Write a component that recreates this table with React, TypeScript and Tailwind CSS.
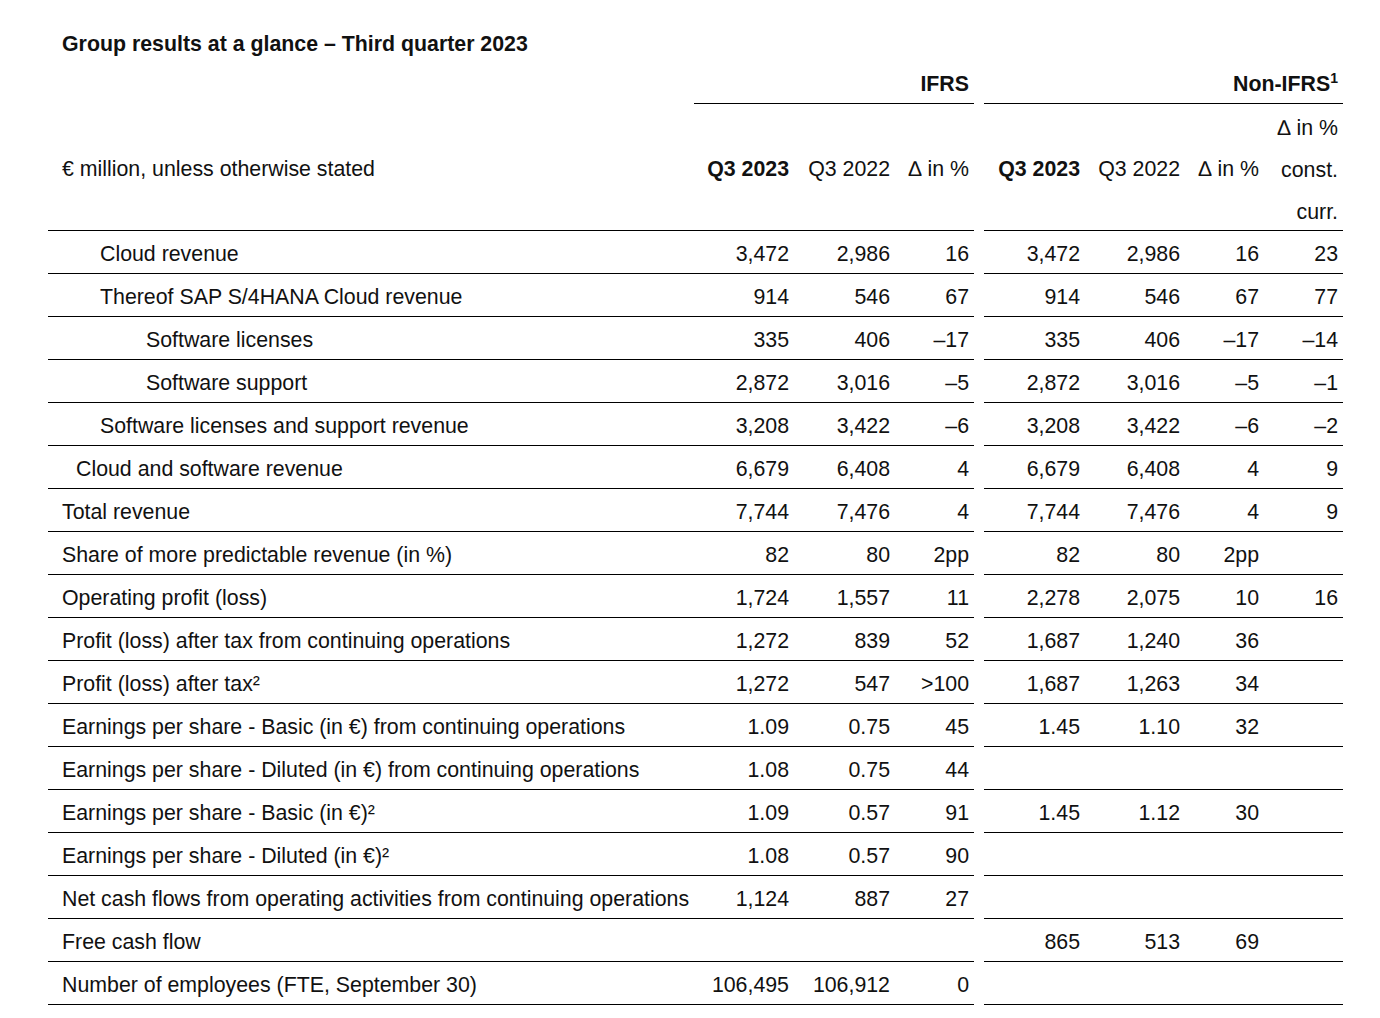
import React from "react";

type Row = {
  label: string;
  indent: 0 | 1 | 2 | 3;
  ifrs: [string, string, string];
  non: [string, string, string, string];
};

const rows: Row[] = [
  { label: "Cloud revenue", indent: 2, ifrs: ["3,472", "2,986", "16"], non: ["3,472", "2,986", "16", "23"] },
  { label: "Thereof SAP S/4HANA Cloud revenue", indent: 2, ifrs: ["914", "546", "67"], non: ["914", "546", "67", "77"] },
  { label: "Software licenses", indent: 3, ifrs: ["335", "406", "–17"], non: ["335", "406", "–17", "–14"] },
  { label: "Software support", indent: 3, ifrs: ["2,872", "3,016", "–5"], non: ["2,872", "3,016", "–5", "–1"] },
  { label: "Software licenses and support revenue", indent: 2, ifrs: ["3,208", "3,422", "–6"], non: ["3,208", "3,422", "–6", "–2"] },
  { label: "Cloud and software revenue", indent: 1, ifrs: ["6,679", "6,408", "4"], non: ["6,679", "6,408", "4", "9"] },
  { label: "Total revenue", indent: 0, ifrs: ["7,744", "7,476", "4"], non: ["7,744", "7,476", "4", "9"] },
  { label: "Share of more predictable revenue (in %)", indent: 0, ifrs: ["82", "80", "2pp"], non: ["82", "80", "2pp", ""] },
  { label: "Operating profit (loss)", indent: 0, ifrs: ["1,724", "1,557", "11"], non: ["2,278", "2,075", "10", "16"] },
  { label: "Profit (loss) after tax from continuing operations", indent: 0, ifrs: ["1,272", "839", "52"], non: ["1,687", "1,240", "36", ""] },
  { label: "Profit (loss) after tax²", indent: 0, ifrs: ["1,272", "547", ">100"], non: ["1,687", "1,263", "34", ""] },
  { label: "Earnings per share - Basic (in €) from continuing operations", indent: 0, ifrs: ["1.09", "0.75", "45"], non: ["1.45", "1.10", "32", ""] },
  { label: "Earnings per share - Diluted (in €) from continuing operations", indent: 0, ifrs: ["1.08", "0.75", "44"], non: ["", "", "", ""] },
  { label: "Earnings per share - Basic (in €)²", indent: 0, ifrs: ["1.09", "0.57", "91"], non: ["1.45", "1.12", "30", ""] },
  { label: "Earnings per share - Diluted (in €)²", indent: 0, ifrs: ["1.08", "0.57", "90"], non: ["", "", "", ""] },
  { label: "Net cash flows from operating activities from continuing operations", indent: 0, ifrs: ["1,124", "887", "27"], non: ["", "", "", ""] },
  { label: "Free cash flow", indent: 0, ifrs: ["", "", ""], non: ["865", "513", "69", ""] },
  { label: "Number of employees (FTE, September 30)", indent: 0, ifrs: ["106,495", "106,912", "0"], non: ["", "", "", ""] },
];

const indentClass = ["pl-[14px]", "pl-[28px]", "pl-[52px]", "pl-[98px]"];

function DataRow({ r }: { r: Row }) {
  return (
    <div className="flex h-[43px]">
      <div className="flex w-[926px] items-center border-b border-black pt-[5px]">
        <div className={"w-[646px] whitespace-nowrap " + indentClass[r.indent]}>{r.label}</div>
        <div className="w-[100px] pr-[5px] text-right">{r.ifrs[0]}</div>
        <div className="w-[101px] pr-[5px] text-right">{r.ifrs[1]}</div>
        <div className="w-[79px] pr-[5px] text-right">{r.ifrs[2]}</div>
      </div>
      <div className="w-[10px]" />
      <div className="flex w-[359px] items-center border-b border-black pt-[5px]">
        <div className="w-[101px] pr-[5px] text-right">{r.non[0]}</div>
        <div className="w-[100px] pr-[5px] text-right">{r.non[1]}</div>
        <div className="w-[79px] pr-[5px] text-right">{r.non[2]}</div>
        <div className="w-[79px] pr-[5px] text-right">{r.non[3]}</div>
      </div>
    </div>
  );
}

export default function App() {
  return (
    <div
      className="min-h-[1018px] w-[1380px] bg-white pl-[48px] pt-[22px] text-[21.33px] text-[#111]"
      style={{ fontFamily: '"Liberation Sans", Arial, Helvetica, sans-serif' }}
    >
      <div className="flex h-[42px] items-center pl-[14px] pt-[3px] font-bold">
        Group results at a glance – Third quarter 2023
      </div>

      {/* Header row 1 */}
      <div className="flex h-[40px]">
        <div className="w-[646px]" />
        <div className="flex w-[280px] items-center justify-end border-b border-black pr-[5px] pt-[2px] font-bold">IFRS</div>
        <div className="w-[10px]" />
        <div className="flex w-[359px] items-center justify-end border-b border-black pr-[5px] pt-[2px] font-bold">
          <span>
            Non-IFRS<sup className="relative -top-[8px] text-[14px]">1</sup>
          </span>
        </div>
      </div>

      {/* Header row 2 */}
      <div className="flex h-[127px]">
        <div className="flex w-[926px] items-center border-b border-black pt-[6px]">
          <div className="w-[646px] pl-[14px]">€ million, unless otherwise stated</div>
          <div className="w-[100px] pr-[5px] text-right font-bold">Q3 2023</div>
          <div className="w-[101px] pr-[5px] text-right">Q3 2022</div>
          <div className="w-[79px] pr-[5px] text-right">∆ in %</div>
        </div>
        <div className="w-[10px]" />
        <div className="flex w-[359px] items-center border-b border-black pt-[6px]">
          <div className="w-[101px] pr-[5px] text-right font-bold">Q3 2023</div>
          <div className="w-[100px] pr-[5px] text-right">Q3 2022</div>
          <div className="w-[79px] pr-[5px] text-right">∆ in %</div>
          <div className="flex w-[79px] flex-col pr-[5px] text-right leading-[42px]">
            <span>∆ in %</span>
            <span>const.</span>
            <span>curr.</span>
          </div>
        </div>
      </div>

      {rows.map((r, i) => (
        <DataRow key={i} r={r} />
      ))}
    </div>
  );
}
